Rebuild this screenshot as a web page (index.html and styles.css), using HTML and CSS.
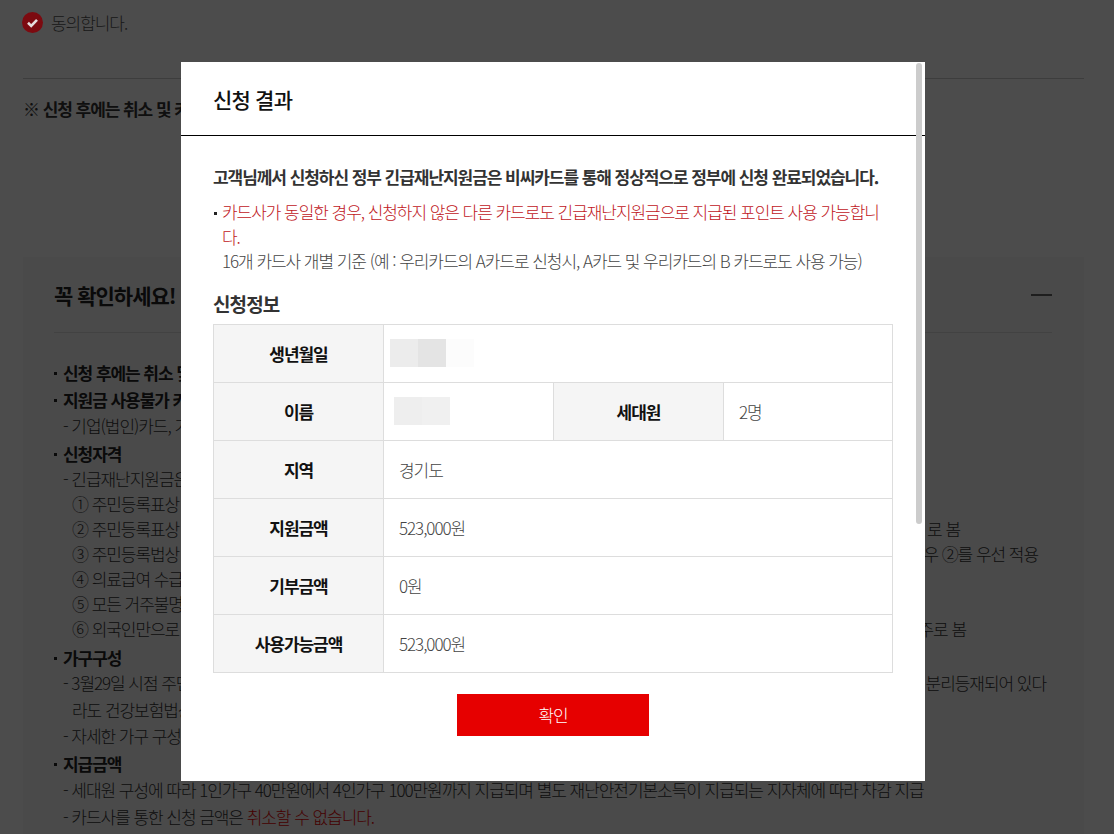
FILE: index.html
```html
<!DOCTYPE html>
<html lang="ko">
<head>
<meta charset="utf-8">
<title>신청 결과</title>
<link rel="stylesheet" href="styles.css">
</head>
<body>
<div class="page">
  <div class="agree">
    <svg class="check" viewBox="0 0 21 21" width="21" height="21"><circle cx="10.5" cy="10.5" r="10.5" fill="#7c0a10"/><path d="M6 10.8l3.2 3.1L15 7.9" fill="none" stroke="#e4dcdc" stroke-width="2.6"/></svg>
    <span>동의합니다.</span>
  </div>
  <p class="notice">※ 신청 후에는 취소 및 카드 변경이 불가능합니다.</p>
  <section class="panel">
    <div class="panel-head">
      <h2>꼭 확인하세요!</h2>
      <span class="minus"></span>
    </div>
    <ul class="info">
      <li class="b">신청 후에는 취소 및 변경이 불가합니다.</li>
      <li class="b mt2">지원금 사용불가 카드</li>
      <li class="d mt1">- 기업(법인)카드, 가족카드 등</li>
      <li class="b mt3">신청자격</li>
      <li class="d">- 긴급재난지원금은 세대주가 신청</li>
      <li class="n">① 주민등록표상 세대주</li>
      <li class="n row r1"><span>② 주민등록표상 세대주</span><span>로 봄</span></li>
      <li class="n row r2"><span>③ 주민등록법상 세대주</span><span>우 ②를 우선 적용</span></li>
      <li class="n">④ 의료급여 수급자</li>
      <li class="n">⑤ 모든 거주불명자</li>
      <li class="n row r3"><span>⑥ 외국인만으로 구성</span><span>주로 봄</span></li>
      <li class="b mt4">가구구성</li>
      <li class="d row r4"><span>- 3월29일 시점 주민등록</span><span>분리등재되어 있다</span></li>
      <li class="n mt2">라도 건강보험법상</li>
      <li class="d mt1">- 자세한 가구 구성</li>
      <li class="b mt3">지급금액</li>
      <li class="d mt1">- 세대원 구성에 따라 1인가구 40만원에서 4인가구 100만원까지 지급되며 별도 재난안전기본소득이 지급되는 지자체에 따라 차감 지급</li>
      <li class="d mt2">- 카드사를 통한 신청 금액은 <em>취소할 수 없습니다.</em></li>
    </ul>
  </section>
</div>
<div class="overlay">
  <div class="modal">
    <header class="modal-head"><h1>신청 결과</h1></header>
    <div class="modal-body">
      <p class="lead">고객님께서 신청하신 정부 긴급재난지원금은 비씨카드를 통해 정상적으로 정부에 신청 완료되었습니다.</p>
      <div class="note">
        <p class="red">카드사가 동일한 경우, 신청하지 않은 다른 카드로도 긴급재난지원금으로 지급된 포인트 사용 가능합니다.</p>
        <p>16개 카드사 개별 기준 (예 : 우리카드의 A카드로 신청시, A카드 및 우리카드의 B 카드로도 사용 가능)</p>
      </div>
      <h3>신청정보</h3>
      <table>
        <colgroup><col class="col"><col class="col"><col class="col"><col></colgroup>
        <tr><th>생년월일</th><td colspan="3"><span class="mask m1"><i></i><i></i><i></i></span></td></tr>
        <tr><th>이름</th><td><span class="mask m2"><i></i><i></i></span></td><th>세대원</th><td>2명</td></tr>
        <tr><th>지역</th><td colspan="3">경기도</td></tr>
        <tr><th>지원금액</th><td colspan="3">523,000원</td></tr>
        <tr><th>기부금액</th><td colspan="3">0원</td></tr>
        <tr><th>사용가능금액</th><td colspan="3">523,000원</td></tr>
      </table>
      <div class="actions"><button type="button">확인</button></div>
    </div>
    <div class="thumb"></div>
  </div>
</div>
</body>
</html>
```
FILE: styles.css
```css
* { box-sizing: border-box; }
html, body { margin: 0; height: 834px; overflow: hidden; }
body { background: #fff; color: #333; font-family: "Noto Sans CJK KR", "Noto Sans", sans-serif; font-weight: 300; font-size: 17px; letter-spacing: -1.05px; }
h1, h2, h3, p, ul { margin: 0; padding: 0; }
.page { padding: 12px 30px 0 23px; }
.agree { display: flex; align-items: center; gap: 8px; height: 21px; }
.agree span { color: #555; }
.check { flex: none; margin-left: -1px; position: relative; z-index: 1; }
.notice { margin-top: 45px; padding-top: 17px; height: 179px; border-top: 1px solid #ccc; font-weight: 700; line-height: 26px; color: #333; }
.panel { background: #f7f7f7; padding: 0 32px 0 31px; height: 600px; }
.panel-head { display: flex; align-items: center; justify-content: space-between; height: 76px; border-bottom: 1px solid #ddd; }
.panel-head h2 { font-size: 21px; font-weight: 700; color: #222; letter-spacing: -1px; }
.minus { width: 21px; height: 2px; background: #666; }
.info { list-style: none; margin-top: 27px; }
.info li { line-height: 25px; white-space: nowrap; }
.info .b { font-weight: 700; color: #222; padding-left: 9px; position: relative; }
.info .b::before { content: ""; position: absolute; left: 0; top: 12px; width: 3px; height: 3px; background: #222; }
.info .d { padding-left: 9px; }
.info .n { padding-left: 18px; }
.info .row { display: flex; justify-content: space-between; }
.info em { font-style: normal; color: #e60000; }
.info .mt1 { margin-top: 1px; }
.info .mt2 { margin-top: 2px; }
.info .mt3 { margin-top: 3px; }
.info .mt4 { margin-top: 4px; }
.r1 { width: 906px; }
.r2 { width: 984px; }
.r3 { width: 912px; }
.r4 { width: 992px; }
.overlay { position: fixed; inset: 0; background: rgba(0, 0, 0, .7); }
.modal { position: absolute; left: 181px; top: 62px; width: 744px; height: 719px; background: #fff; overflow: hidden; }
.modal-head { height: 74px; border-bottom: 1px solid #000; padding: 0 32px; display: flex; align-items: center; }
.modal-head h1 { font-size: 21px; font-weight: 500; color: #111; letter-spacing: -0.8px; }
.modal-body { padding: 28px 32px 0; }
.lead { font-weight: 700; line-height: 26px; color: #333; }
.note { margin-top: 10px; padding-left: 9px; line-height: 24.5px; position: relative; }
.note::before { content: ""; position: absolute; left: 1px; top: 12px; width: 3px; height: 3px; background: #222; }
.note p { color: #444; word-break: break-all; }
.note .red { color: #c0161c; }
h3 { margin-top: 15px; font-size: 19px; font-weight: 700; line-height: 30px; color: #333; letter-spacing: -0.9px; }
table { border-collapse: collapse; table-layout: fixed; width: 680px; margin-top: 5px; }
.col { width: 170px; }
tr { height: 58px; }
th, td { border: 1px solid #ddd; padding: 0 15px; }
th { background: #f5f5f5; font-weight: 700; color: #111; text-align: center; }
td { color: #444; }
.mask { display: flex; height: 28px; }
.mask i { width: 28px; }
.m1 { margin-left: -9px; }
.m1 i:nth-child(1) { background: #ececec; }
.m1 i:nth-child(2) { background: #e4e4e4; }
.m1 i:nth-child(3) { background: #fcfcfc; }
.m2 { margin-left: -5px; }
.m2 i:nth-child(1) { background: #eee; }
.m2 i:nth-child(2) { background: #f0f0f0; }
.actions { display: flex; justify-content: center; margin-top: 21px; }
button { width: 192px; height: 42px; border: 0; background: #e60000; color: #fff; font: inherit; letter-spacing: inherit; }
.thumb { position: absolute; right: 3px; top: 1px; width: 6px; height: 461px; border-radius: 3px; background: #ccc; }
```
